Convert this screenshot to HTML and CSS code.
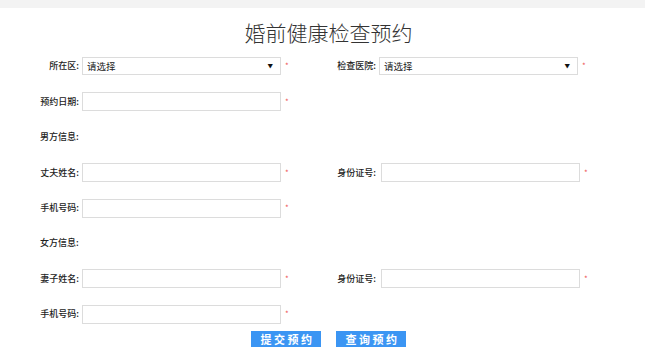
FILE: index.html
```html
<!DOCTYPE html>
<html lang="zh-CN">
<head>
<meta charset="utf-8">
<title>婚前健康检查预约</title>
<link rel="stylesheet" href="styles.css">
</head>
<body>
<div class="topbar"></div>
<h1 class="title">婚前健康检查预约</h1>
<form class="form">
  <div class="row">
    <div class="field">
      <label class="label">所在区:</label>
      <div class="select"><span>请选择</span><span class="arrow">▼</span></div>
      <span class="star">*</span>
    </div>
    <div class="field">
      <label class="label">检查医院:</label>
      <div class="select"><span>请选择</span><span class="arrow">▼</span></div>
      <span class="star">*</span>
    </div>
  </div>
  <div class="row">
    <div class="field">
      <label class="label">预约日期:</label>
      <input class="input" type="text">
      <span class="star">*</span>
    </div>
  </div>
  <div class="row">
    <div class="field"><span class="label section">男方信息:</span></div>
  </div>
  <div class="row">
    <div class="field">
      <label class="label">丈夫姓名:</label>
      <input class="input" type="text">
      <span class="star">*</span>
    </div>
    <div class="field">
      <label class="label">身份证号:</label>
      <input class="input input-id" type="text">
      <span class="star">*</span>
    </div>
  </div>
  <div class="row">
    <div class="field">
      <label class="label">手机号码:</label>
      <input class="input" type="text">
      <span class="star">*</span>
    </div>
  </div>
  <div class="row">
    <div class="field"><span class="label section">女方信息:</span></div>
  </div>
  <div class="row">
    <div class="field">
      <label class="label">妻子姓名:</label>
      <input class="input" type="text">
      <span class="star">*</span>
    </div>
    <div class="field">
      <label class="label">身份证号:</label>
      <input class="input input-id" type="text">
      <span class="star">*</span>
    </div>
  </div>
  <div class="row">
    <div class="field">
      <label class="label">手机号码:</label>
      <input class="input" type="text">
      <span class="star">*</span>
    </div>
  </div>
  <div class="buttons">
    <button type="button" class="btn">提交预约</button>
    <button type="button" class="btn">查询预约</button>
  </div>
</form>
</body>
</html>
```
FILE: styles.css
```css
html, body {
  margin: 0;
  padding: 0;
  background: #ffffff;
  font-family: "Noto Sans CJK SC", "Liberation Sans", sans-serif;
  color: #333;
}
.topbar {
  height: 8px;
  background: #f3f3f3;
}
.title {
  margin: 0;
  height: 40.8px;
  line-height: 48px;
  padding-left: 12px;
  text-align: center;
  font-size: 21px;
  font-weight: 300;
  color: #333;
}
.form {
  margin: 0;
}
.row {
  display: flex;
  height: 35.4px;
  align-items: center;
}
.field {
  display: flex;
  align-items: center;
  width: 297px;
}
.label {
  width: 79px;
  flex: none;
  text-align: right;
  font-size: 9px;
  line-height: 12px;
  color: #222;
  font-weight: 500;
  margin-right: 3px;
}
.section {
  text-align: left;
  padding-left: 40px;
  width: 39px;
}
.input, .select {
  box-sizing: border-box;
  width: 199px;
  height: 19px;
  border: 1px solid #dcdcdc;
  margin: 0;
  padding: 0 4px;
  background: #fff;
  flex: none;
  outline: none;
}
.input-id {
  margin-left: 2px;
}
.select {
  display: flex;
  align-items: center;
  justify-content: space-between;
  font-size: 9.5px;
  color: #222;
  height: 18px;
}
.arrow {
  font-size: 5.5px;
  color: #111;
  margin-right: 3px;
}
.star {
  color: #e55;
  font-size: 8px;
  margin-left: 4px;
  line-height: 8px;
}
.buttons {
  display: flex;
  justify-content: center;
  gap: 15px;
  padding-left: 12px;
  margin-top: -1px;
}
.btn {
  width: 70px;
  height: 16px;
  border: none;
  background: #3b95f3;
  color: #fff;
  font-family: "Noto Sans CJK SC", sans-serif;
  font-size: 11px;
  font-weight: 700;
  letter-spacing: 2.5px;
  padding: 0 0 0 3px;
  line-height: 16px;
}
```
